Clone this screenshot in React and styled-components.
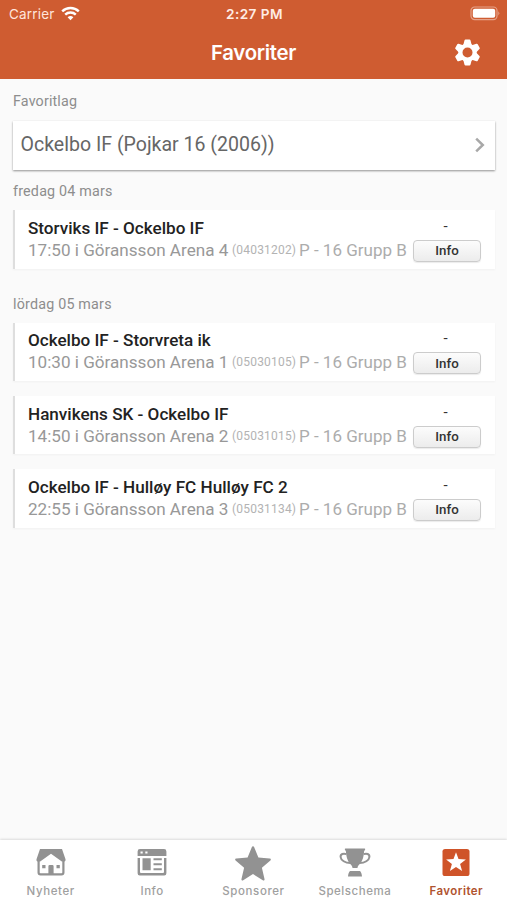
import styled, { createGlobalStyle } from 'styled-components';

const GlobalStyle = createGlobalStyle`
  * {
    box-sizing: border-box;
  }
  body {
    margin: 0;
    background: #fafafa;
    font-family: Roboto, 'Liberation Sans', sans-serif;
  }
  p, h1, h2 {
    margin: 0;
  }
`;

const Screen = styled.div`
  display: flex;
  flex-direction: column;
  height: 900px;
  width: 507px;
  overflow: hidden;
  background: #fafafa;
`;

const Header = styled.header`
  height: 79px;
  flex-shrink: 0;
  background: #cf5c31;
  color: #fff;
  font-family: Inter, 'Liberation Sans', sans-serif;
`;

const StatusBar = styled.div`
  display: grid;
  grid-template-columns: 1fr auto 1fr;
  align-items: center;
  height: 27px;
  padding: 0 7px 0 9px;
`;

const Carrier = styled.div`
  display: flex;
  align-items: center;
  gap: 6px;
  font-size: 13.5px;
  letter-spacing: 0.2px;
  color: #ffe5dc;
`;

const Clock = styled.span`
  font-size: 13.6px;
  font-weight: 600;
  letter-spacing: 0.45px;
  color: #ffece4;
`;

const Battery = styled.svg`
  justify-self: end;
`;

const TitleBar = styled.div`
  display: grid;
  grid-template-columns: 1fr auto 1fr;
  align-items: center;
  height: 50px;
  padding: 0 26px;
`;

const Title = styled.h1`
  grid-column: 2;
  font-size: 20.4px;
  font-weight: 600;
  letter-spacing: -0.3px;
`;

const SettingsButton = styled.button`
  justify-self: end;
  display: flex;
  padding: 0;
  border: 0;
  background: none;
  color: #fff;
`;

const Content = styled.main`
  flex: 1;
  padding: 12px 12px 0 13px;
`;

const Label = styled.h2`
  height: ${({ $height }) => $height || 20}px;
  line-height: 20px;
  font-size: 14.3px;
  font-weight: 400;
  letter-spacing: ${({ $spacing }) => $spacing || 0.2}px;
  color: #8d8d8d;
`;

const TeamCard = styled.div`
  display: flex;
  align-items: center;
  justify-content: space-between;
  height: 49px;
  margin-bottom: 11.5px;
  padding: 0 9px 1px 7.5px;
  background: #fff;
  color: #666;
  font-size: 19.55px;
  box-shadow: 0 1px 2px rgba(0, 0, 0, 0.42);
`;

const Day = styled.section`
  margin-bottom: 25px;
`;

const Match = styled.article`
  display: flex;
  justify-content: space-between;
  height: 58.5px;
  margin-bottom: 14.8px;
  padding: 6.8px 14px 0 13px;
  border-left: 2px solid #dedede;
  background: #fff;
  box-shadow: 0 1px 2px rgba(0, 0, 0, 0.04);
`;

const MatchTeams = styled.p`
  line-height: 22px;
  font-size: 17.1px;
  font-weight: 500;
  color: #222;
`;

const MatchMeta = styled.p`
  display: flex;
  align-items: center;
  height: 22px;
  line-height: 22px;
  white-space: nowrap;
`;

const Place = styled.span`
  width: 204px;
  font-size: 17.1px;
  color: #989898;
`;

const Code = styled.span`
  width: 67px;
  font-size: 12px;
  letter-spacing: 0.2px;
  color: #b3b3b3;
`;

const Group = styled.span`
  font-size: 17px;
  color: #acacac;
`;

const Result = styled.div`
  display: flex;
  flex-direction: column;
  align-items: center;
  width: 68px;
  flex-shrink: 0;
`;

const Score = styled.span`
  height: 23px;
  line-height: 18px;
  padding-right: 3px;
  font-size: 15px;
  color: #333;
`;

const InfoButton = styled.button`
  width: 68px;
  height: 22px;
  padding: 0;
  border: 1px solid #ccc;
  border-radius: 4px;
  background: linear-gradient(#fcfcfc, #ececec);
  box-shadow: 0 1px 1px rgba(0, 0, 0, 0.08);
  font-family: inherit;
  font-size: 13.3px;
  font-weight: 500;
  color: #333;
`;

const TabBar = styled.nav`
  display: grid;
  grid-template-columns: repeat(5, 1fr);
  height: 60px;
  flex-shrink: 0;
  background: #fff;
  box-shadow: 0 -1px 2px rgba(0, 0, 0, 0.12);
`;

const Tab = styled.a`
  display: flex;
  flex-direction: column;
  align-items: center;
  padding-top: 4px;
  color: ${({ $active }) => ($active ? '#cf5429' : '#929292')};
`;

const TabIcon = styled.svg`
  fill: currentColor;
`;

const TabLabel = styled.span`
  margin-top: 1px;
  line-height: 16px;
  font-family: Inter, 'Liberation Sans', sans-serif;
  font-size: 11.5px;
  font-weight: ${({ $active }) => ($active ? 600 : 500)};
  letter-spacing: ${({ $spacing }) => $spacing}px;
  color: ${({ $active }) => ($active ? '#b0532f' : '#a0a0a0')};
`;

const GearIcon = () => (
  <svg width="27" height="27" viewBox="-14 -14 28 28">
    <circle r="7.4" fill="none" stroke="currentColor" strokeWidth="4.4" />
    {[0, 60, 120, 180, 240, 300].map(angle => (
      <path
        key={angle}
        d="M-2-12.2h4l1 4h-6z"
        fill="currentColor"
        stroke="currentColor"
        strokeWidth="2.4"
        strokeLinejoin="round"
        transform={`rotate(${angle})`}
      />
    ))}
  </svg>
);

const icons = {
  home: (
    <>
      <path d="M8 5h22l3.5 10.2c.4 1.4-.6 2.3-1.8 2.3h-1.9L19 9.8 8.2 17.5H6.3c-1.2 0-2.2-.9-1.8-2.3z" />
      <path
        fill="none"
        stroke="currentColor"
        strokeWidth="2.2"
        d="M6.6 16v12.4q0 1.9 1.9 1.9h21q1.9 0 1.9-1.9V16"
      />
      <path d="M10.2 21h3.3v3.3h-3.3zM24.5 21h3.3v3.3h-3.3zM17.6 21h2.8q1.2 0 1.2 1.2V30h-5.2v-7.8q0-1.2 1.2-1.2z" />
    </>
  ),
  news: (
    <>
      <path
        fillRule="evenodd"
        d="M7 5h24q2.4 0 2.4 2.4V12H4.6V7.4Q4.6 5 7 5zM7.5 7.4v2.2h2.2V7.4zm4.8 0v2.2h2.2V7.4z"
      />
      <path
        fillRule="evenodd"
        d="M4.6 14h28.8v15.2q0 2.2-2.2 2.2H6.8q-2.2 0-2.2-2.2zM7 14v14q0 1 1 1h22q1 0 1-1V14z"
      />
      <path d="M9.5 14.2h8.2v12.1H9.5zM20.5 14.2h8.3v2h-8.3zM20.5 19.2h8.3v2h-8.3zM20.5 24.3h8.3v2h-8.3z" />
    </>
  ),
  star: (
    <path d="M19 2.2c.6 0 .9.4 1.1.9l4.3 10.4 11.2.9c1.2.1 1.7 1.2.8 2l-8.5 7.3 2.6 11.4c.3 1.2-.8 1.8-1.7 1.2L19 30.1l-9.8 6.2c-.9.6-2-.1-1.7-1.2l2.6-11.4-8.5-7.3c-.9-.8-.4-1.9.8-2l11.2-.9 4.3-10.4c.2-.5.5-.9 1.1-.9z" />
  ),
  trophy: (
    <>
      <path d="M9.4 4.6h19.2c.4 0 .7.3.6.8l-1.1 1.8c-.4 5-1.2 9.4-4.3 12.7-1.5 1.6-2.3 2.4-2.3 4.1h-5c0-1.7-.8-2.5-2.3-4.1-3.1-3.3-3.9-7.7-4.3-12.7L8.8 5.4c-.1-.5.2-.8.6-.8z" />
      <path
        fill="none"
        stroke="currentColor"
        strokeWidth="2"
        d="M10.4 10.2C7.5 8.9 4.3 10 4.6 13c.3 3.2 4.4 6.2 10.4 6M27.6 10.2c2.9-1.3 6.1-.2 5.8 2.8-.3 3.2-4.4 6.2-10.4 6"
      />
      <path d="M14 27h10c1.2 1 1.8 3 2 5.4H12c.2-2.4.8-4.4 2-5.4z" />
    </>
  ),
  favorite: (
    <>
      <rect x="5.5" y="5" width="27" height="27" rx="2.6" />
      <path
        fill="#fff"
        d="M19 8.2l2.5 6.8 7.4.5-5.8 4.5 2 7.1-6.1-4.1-6.1 4.1 2-7.1-5.8-4.5 7.4-.5z"
      />
    </>
  ),
};

const days = [
  {
    date: 'fredag 04 mars',
    matches: [
      { teams: 'Storviks IF - Ockelbo IF', place: '17:50 i Göransson Arena 4', code: '(04031202)' },
    ],
  },
  {
    date: 'lördag 05 mars',
    matches: [
      { teams: 'Ockelbo IF - Storvreta ik', place: '10:30 i Göransson Arena 1', code: '(05030105)' },
      { teams: 'Hanvikens SK - Ockelbo IF', place: '14:50 i Göransson Arena 2', code: '(05031015)' },
      {
        teams: 'Ockelbo IF - Hulløy FC Hulløy FC 2',
        place: '22:55 i Göransson Arena 3',
        code: '(05031134)',
      },
    ],
  },
];

const tabs = [
  { label: 'Nyheter', icon: 'home', spacing: 0.6 },
  { label: 'Info', icon: 'news', spacing: 0.5 },
  { label: 'Sponsorer', icon: 'star', spacing: 0.6 },
  { label: 'Spelschema', icon: 'trophy', spacing: 0.55 },
  { label: 'Favoriter', icon: 'favorite', spacing: 0.45, active: true },
];

export default function App() {
  return (
    <Screen>
      <GlobalStyle />
      <Header>
        <StatusBar>
          <Carrier>
            Carrier
            <svg width="19" height="15" viewBox="0 0 19 15" fill="none" stroke="#fff" strokeWidth="2.4">
              <path d="M1.2 5.3a12 12 0 0 1 16.6 0M4.2 8.6a7.6 7.6 0 0 1 10.6 0" />
              <path d="M9.5 14.2L6.6 11.3a4.2 4.2 0 0 1 5.8 0z" fill="#fff" stroke="none" />
            </svg>
          </Carrier>
          <Clock>2:27 PM</Clock>
          <Battery width="31" height="15" viewBox="0 0 31 15">
            <rect x="2" y="1" width="26" height="12.6" rx="3.6" fill="none" stroke="#e5a28a" strokeWidth="1.2" />
            <rect x="3.8" y="2.8" width="22.4" height="9" rx="2" fill="#fff" />
            <path d="M29.3 5.2q2 2.1 0 4.2z" fill="#e5a28a" />
          </Battery>
        </StatusBar>
        <TitleBar>
          <Title>Favoriter</Title>
          <SettingsButton aria-label="Settings">
            <GearIcon />
          </SettingsButton>
        </TitleBar>
      </Header>
      <Content>
        <Label $height={29.5} $spacing={0.15}>
          Favoritlag
        </Label>
        <TeamCard>
          Ockelbo IF (Pojkar 16 (2006))
          <svg width="12" height="18" viewBox="0 0 12 18" fill="none" stroke="#a8a8a8" strokeWidth="2.5">
            <path d="M2.2 2.6L8.8 9l-6.6 6.4" />
          </svg>
        </TeamCard>
        {days.map(day => (
          <Day key={day.date}>
            <Label $height={29}>{day.date}</Label>
            {day.matches.map(match => (
              <Match key={match.code}>
                <div>
                  <MatchTeams>{match.teams}</MatchTeams>
                  <MatchMeta>
                    <Place>{match.place}</Place>
                    <Code>{match.code}</Code>
                    <Group>P - 16 Grupp B</Group>
                  </MatchMeta>
                </div>
                <Result>
                  <Score>-</Score>
                  <InfoButton>Info</InfoButton>
                </Result>
              </Match>
            ))}
          </Day>
        ))}
      </Content>
      <TabBar>
        {tabs.map(({ label, icon, active, spacing }) => (
          <Tab key={label} $active={active}>
            <TabIcon width="38" height="38" viewBox="0 0 38 38">
              {icons[icon]}
            </TabIcon>
            <TabLabel $active={active} $spacing={spacing}>
              {label}
            </TabLabel>
          </Tab>
        ))}
      </TabBar>
    </Screen>
  );
}
